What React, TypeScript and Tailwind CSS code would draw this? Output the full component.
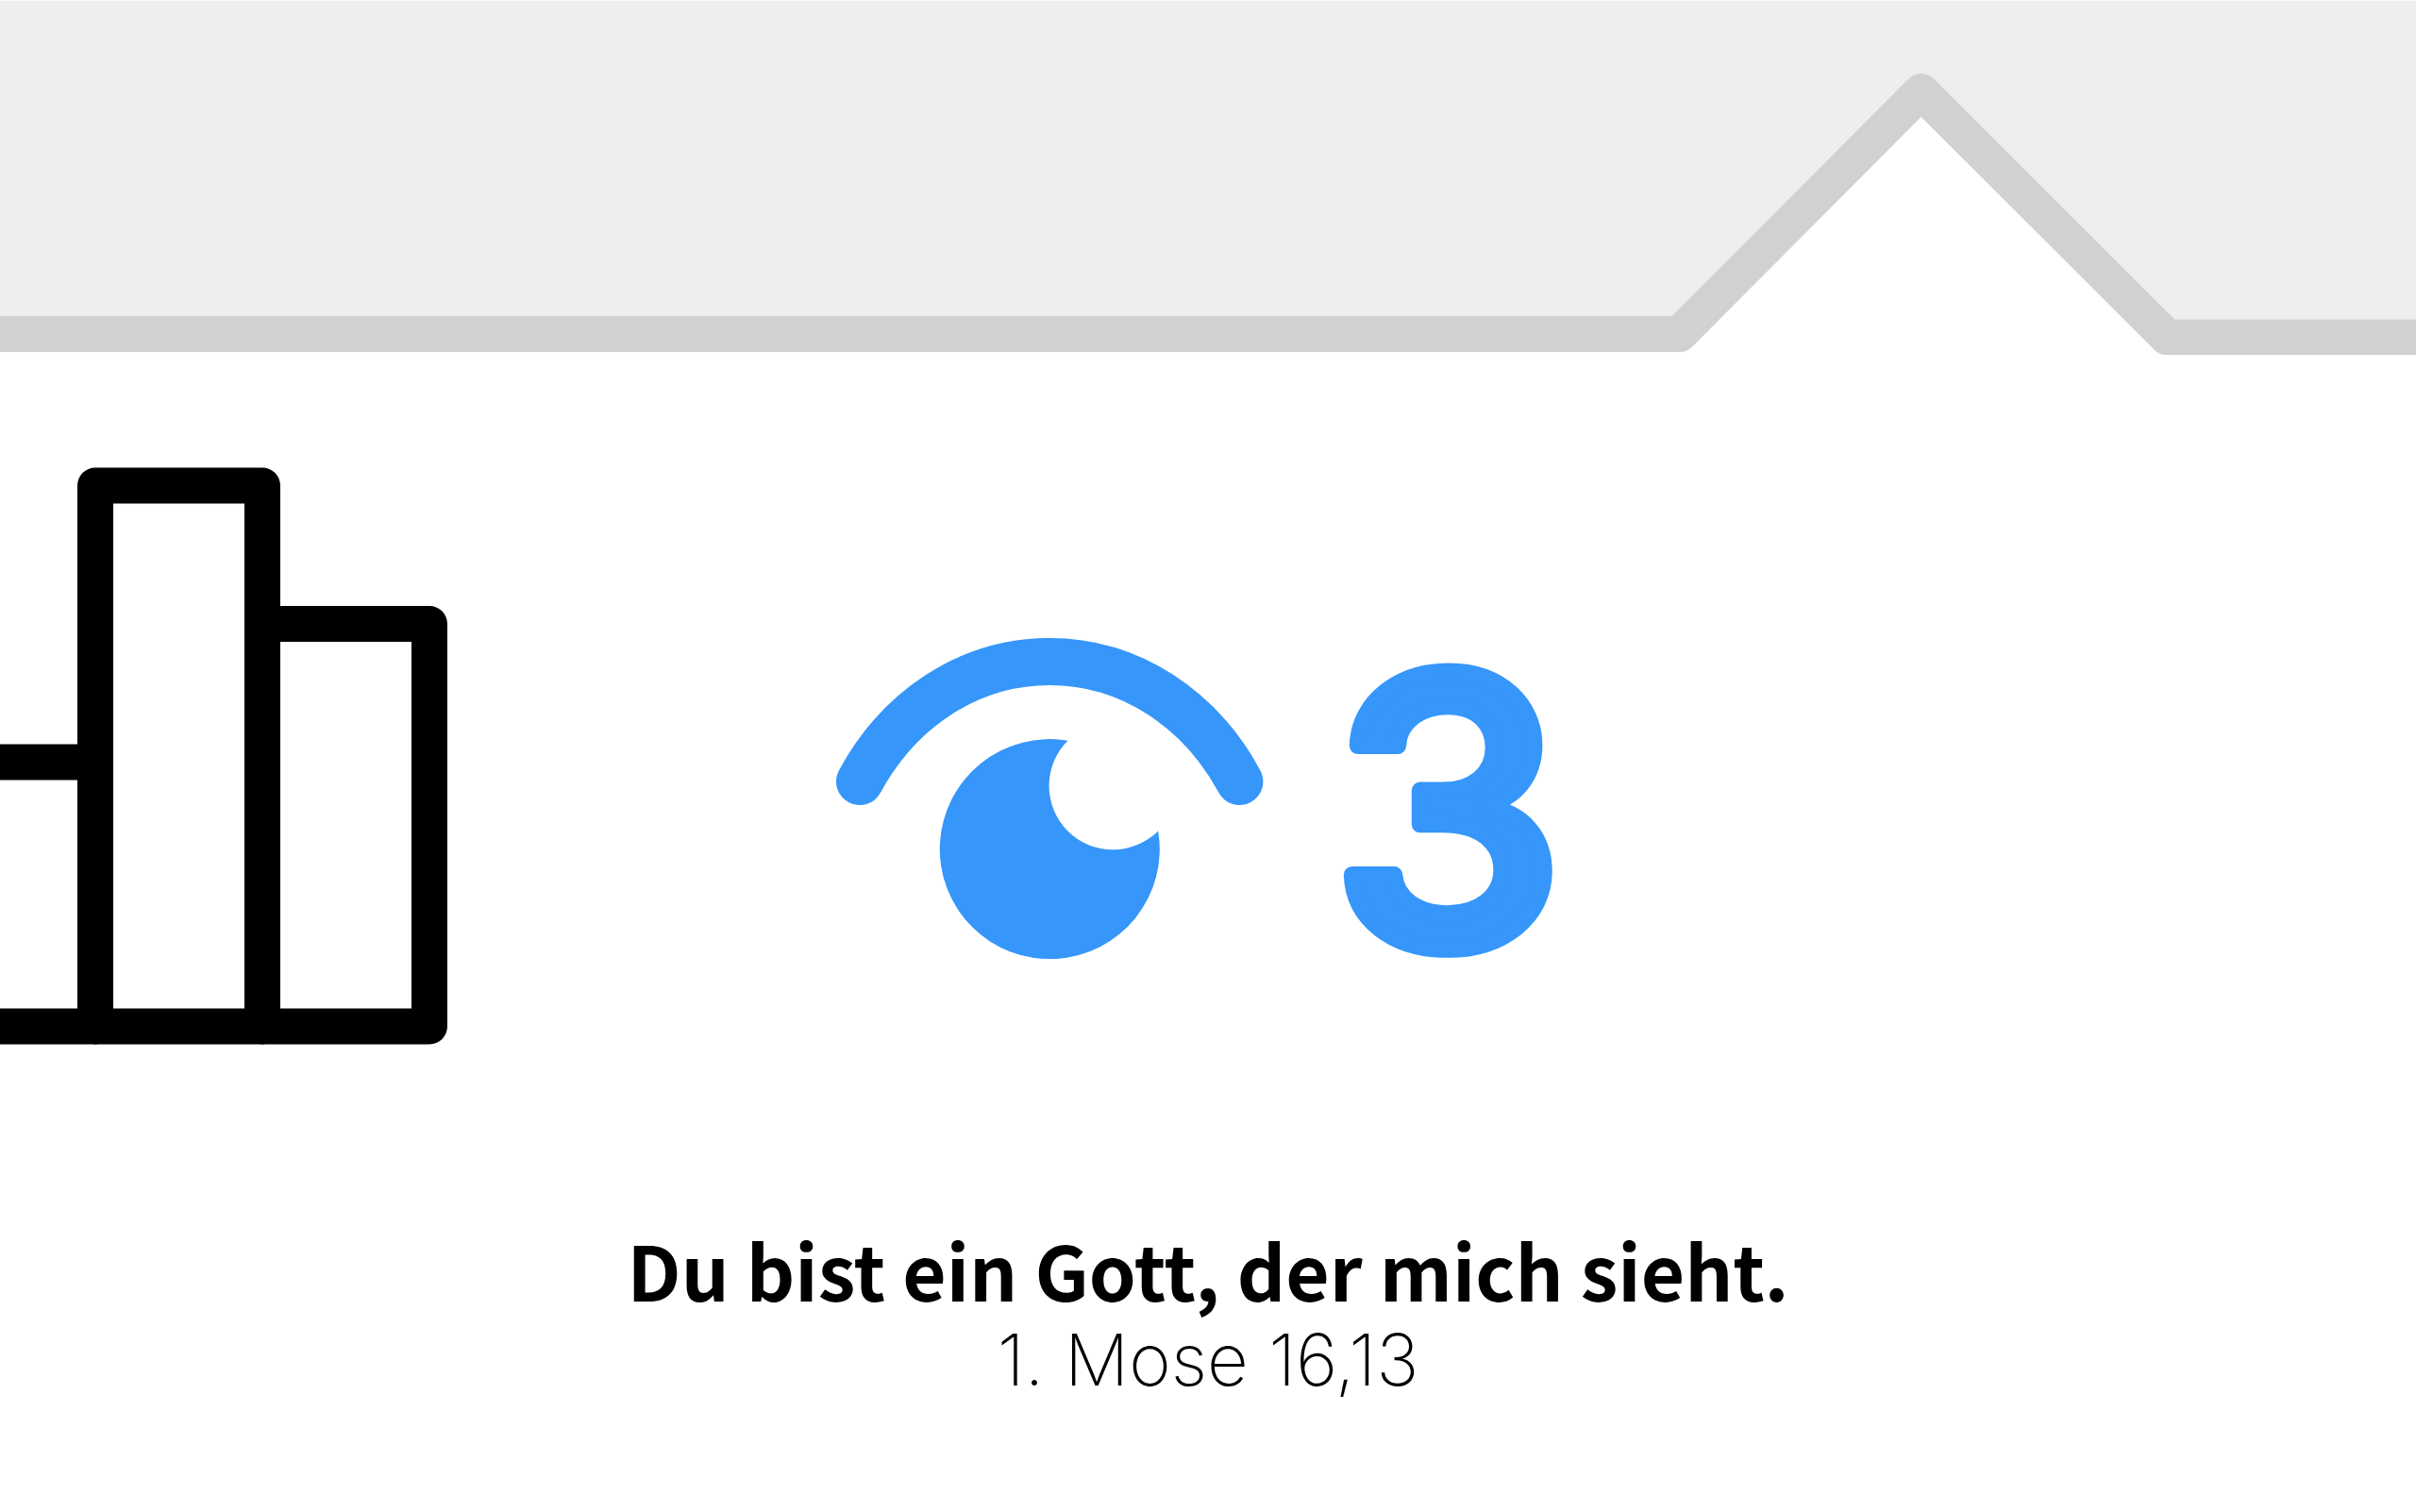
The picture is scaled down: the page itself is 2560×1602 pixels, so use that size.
import React from "react";

const Skyline: React.FC = () => (
  <svg
    viewBox="0 0 2560 375"
    className="block w-full h-auto"
    fill="none"
    aria-hidden="true"
  >
    <path
      d="M-40 353H1779.5L2035.7 96L2296.5 356.5H2600V420H-40Z"
      className="fill-white"
    />
    <path
      d="M-40 353H1779.5L2035.7 96L2296.5 356.5H2600"
      className="stroke-[#d1d1d1]"
      strokeWidth="38"
      strokeLinejoin="round"
    />
  </svg>
);

const Houses: React.FC = () => (
  <svg
    viewBox="0 0 474 612"
    className="block w-[474px] h-auto stroke-black"
    fill="none"
    strokeWidth="38"
    strokeLinejoin="round"
    aria-hidden="true"
  >
    <path d="M-60 312.5H101V592.5H-60Z" />
    <path d="M101 19.5H278V592.5H101Z" />
    <path d="M278 166H455V592.5H278Z" />
  </svg>
);

const Logo: React.FC = () => (
  <svg
    viewBox="864 606 832 500"
    className="block w-[832px] h-auto text-[#3696fa]"
    role="img"
    aria-label="3"
  >
    <path
      d="M911 828C952 752 1026 701 1112.2 701S1272.4 752 1313.4 828"
      fill="none"
      stroke="currentColor"
      strokeWidth="50"
      strokeLinecap="round"
    />
    <path
      d="M1131.4 784.7A116.5 116.5 0 1 0 1227.2 880.4A67 67 0 1 1 1131.4 784.7Z"
      fill="currentColor"
    />
    <text
      x="1534"
      y="1002"
      textAnchor="middle"
      fill="currentColor"
      stroke="currentColor"
      strokeWidth="18"
      strokeLinejoin="round"
      className="font-['Inter',sans-serif] font-medium text-[394px]"
    >
      3
    </text>
  </svg>
);

const App: React.FC = () => {
  return (
    <div className="min-h-screen bg-white text-black">
      <header className="bg-[#eeeeee] border-t border-[#fafafa]">
        <Skyline />
      </header>

      <main className="pt-[119px]">
        <div className="grid grid-cols-[1fr_auto_1fr] items-start">
          <Houses />
          <div className="pt-[111px]">
            <Logo />
          </div>
        </div>

        <div className="pt-[191px] text-center whitespace-nowrap">
          <h1 className="font-['Noto_Sans_CJK_JP',sans-serif] font-bold text-[80px] leading-[92px]">
            Du bist ein Gott, der mich sieht.
          </h1>
          <p className="pt-1 font-['Inter',sans-serif] font-extralight text-[76px] leading-[92px]">
            1. Mose 16,13
          </p>
        </div>
      </main>
    </div>
  );
};

export default App;
